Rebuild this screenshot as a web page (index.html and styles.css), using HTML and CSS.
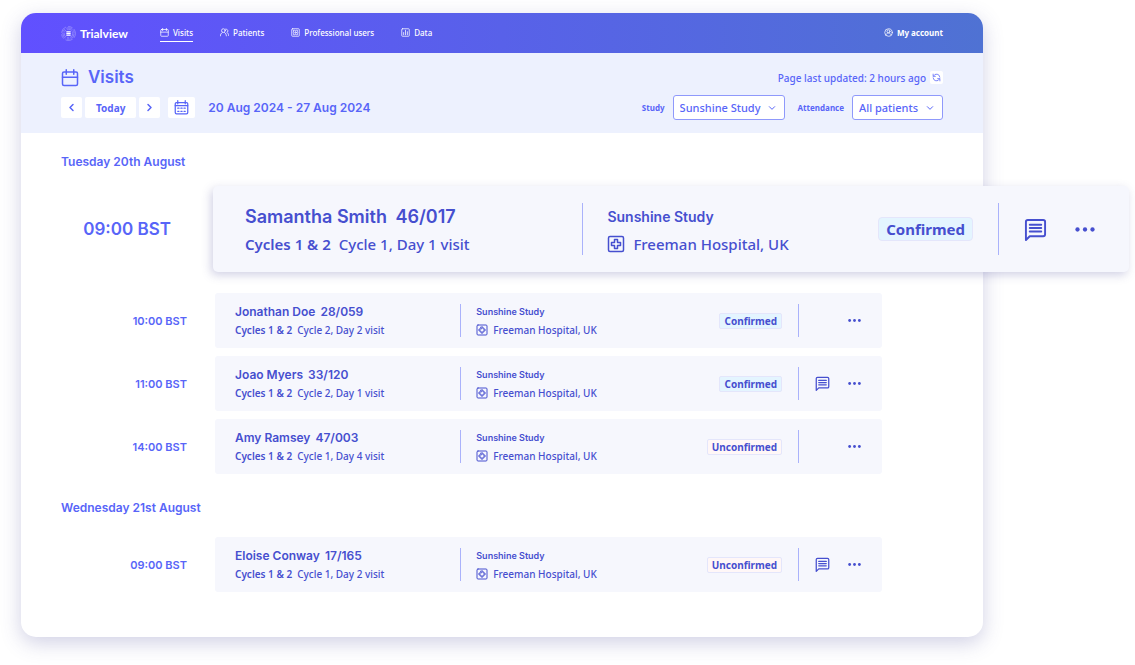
FILE: index.html
```html
<!DOCTYPE html>
<html lang="en">
<head>
    <meta charset="UTF-8">
    <meta name="viewport" content="width=device-width, initial-scale=1.0">
    <title>Trialview - Visits</title>

    <link rel="stylesheet" href="styles.css">
</head>
<body>

    <!-- shared icons -->
    <svg class="sprite" aria-hidden="true">
        <symbol id="calendar" viewBox="0 0 24 24">
            <rect x="2" y="4" width="20" height="18" rx="2"/>
            <path d="M2 11h20M7 1v6M17 1v6"/>
        </symbol>
        <symbol id="calendar-days" viewBox="0 0 24 24">
            <rect x="2" y="4" width="20" height="18" rx="2"/>
            <path d="M2 9h20M6 1v5M18 1v5"/>
            <path d="M6 13h2M11 13h2M16 13h2M6 18h2M11 18h2M16 18h2"/>
        </symbol>
        <symbol id="hospital" viewBox="0 0 24 24">
            <rect x="2" y="2" width="20" height="20" rx="2"/>
            <path d="M10 6h4v4h4v4h-4v4h-4v-4H6v-4h4z"/>
        </symbol>
        <symbol id="message" viewBox="0 0 24 24">
            <path d="M2 23V4a2 2 0 0 1 2-2h16a2 2 0 0 1 2 2v13a2 2 0 0 1-2 2H6z"/>
            <path d="M6 7h12M6 10.500h12M6 14h12"/>
        </symbol>
        <symbol id="dots" viewBox="0 0 24 24">
            <circle cx="3" cy="12" r="2.600"/>
            <circle cx="12" cy="12" r="2.600"/>
            <circle cx="21" cy="12" r="2.600"/>
        </symbol>
        <symbol id="chevron" viewBox="0 0 24 24">
            <path d="M4 8l8 8 8-8"/>
        </symbol>
    </svg>

    <div class="app">

        <header class="navbar">
            <a class="logo" href="#">
                <svg class="logo-mark" viewBox="0 0 28 28" aria-hidden="true">
                    <circle cx="14" cy="14" r="13" stroke-dasharray="9 3 14 4"/>
                    <circle cx="14" cy="14" r="10.500" stroke-dasharray="12 2 5 3"/>
                    <circle cx="14" cy="14" r="8" stroke-dasharray="9 2 4 2"/>
                    <path class="logo-lines" d="M10 11h8M10 14h8M10 17h8"/>
                </svg>
                <span>Trialview</span>
            </a>
            <nav class="menu">
                <a class="menu-link active" href="#">
                    <svg class="icon"><use href="#calendar"/></svg>Visits
                </a>
                <a class="menu-link" href="#">
                    <svg class="icon" viewBox="0 0 24 24">
                        <circle cx="9" cy="7" r="5"/>
                        <path d="M1 21c0-4 2-7 5-9M12 12c3 2 5 5 5 9M15 3c4 0 6 2 6 5 0 2-1 3-3 4 3 1 5 4 5 8"/>
                    </svg>Patients
                </a>
                <a class="menu-link" href="#">
                    <svg class="icon" viewBox="0 0 24 24">
                        <rect x="2" y="2" width="20" height="20" rx="2"/>
                        <path d="M7 6h2l3 1 3-1h2v3l1 3-1 3v3h-2l-3-1-3 1H7v-3l-1-3 1-3z"/>
                        <circle cx="12" cy="12" r="2"/>
                    </svg>Professional users
                </a>
                <a class="menu-link" href="#">
                    <svg class="icon" viewBox="0 0 24 24">
                        <rect x="2" y="2" width="20" height="20" rx="2"/>
                        <path d="M7 18v-6M12 18V6M17 18v-8"/>
                    </svg>Data
                </a>
            </nav>
            <a class="menu-link account" href="#">
                <svg class="icon" viewBox="0 0 24 24">
                    <circle cx="12" cy="12" r="10"/>
                    <circle cx="12" cy="9" r="4"/>
                    <path d="M5 19c1-4 4-6 7-6s6 2 7 6"/>
                </svg>My account
            </a>
        </header>

        <section class="toolbar">
            <div class="toolbar-row">
                <h1 class="title"><svg class="icon"><use href="#calendar"/></svg>Visits</h1>
                <div class="updated">
                    <span>Page last updated: 2 hours ago</span>
                    <button class="refresh" aria-label="Refresh">
                        <svg class="icon" viewBox="0 0 24 24">
                            <path d="M3 3v6h6M21 21v-6h-6M4 8a9 9 0 0 1 17 3M20 16a9 9 0 0 1-17-3"/>
                        </svg>
                    </button>
                </div>
            </div>
            <div class="toolbar-row">
                <div class="dates">
                    <button class="btn" aria-label="Previous week"><svg class="icon left"><use href="#chevron"/></svg></button>
                    <button class="btn today">Today</button>
                    <button class="btn" aria-label="Next week"><svg class="icon right"><use href="#chevron"/></svg></button>
                    <button class="btn pick" aria-label="Pick a date"><svg class="icon"><use href="#calendar-days"/></svg></button>
                    <h2 class="range">20 Aug 2024 - 27 Aug 2024</h2>
                </div>
                <form class="filters">
                    <label for="study">Study</label>
                    <div class="select">
                        <select id="study">
                            <option>Sunshine Study</option>
                        </select>
                        <svg class="icon"><use href="#chevron"/></svg>
                    </div>
                    <label for="attendance">Attendance</label>
                    <div class="select">
                        <select id="attendance">
                            <option>All patients</option>
                        </select>
                        <svg class="icon"><use href="#chevron"/></svg>
                    </div>
                </form>
            </div>
        </section>

        <main class="schedule">

            <h2 class="day">Tuesday 20th August</h2>

            <div class="visit featured">
                <time class="time">09:00 BST</time>
                <article class="card">
                    <div class="patient">
                        <h3 class="name">Samantha Smith <span>46/017</span></h3>
                        <p class="line"><b>Cycles 1 &amp; 2</b> Cycle 1, Day 1 visit</p>
                    </div>
                    <div class="study">
                        <div>
                            <h4 class="study-name">Sunshine Study</h4>
                            <p class="line"><svg class="icon"><use href="#hospital"/></svg>Freeman Hospital, UK</p>
                        </div>
                        <span class="badge confirmed">Confirmed</span>
                    </div>
                    <div class="actions">
                        <button class="action" aria-label="Messages"><svg class="icon"><use href="#message"/></svg></button>
                        <button class="action more" aria-label="More"><svg class="icon"><use href="#dots"/></svg></button>
                    </div>
                </article>
            </div>

            <div class="visit">
                <time class="time">10:00 BST</time>
                <article class="card">
                    <div class="patient">
                        <h3 class="name">Jonathan Doe <span>28/059</span></h3>
                        <p class="line"><b>Cycles 1 &amp; 2</b> Cycle 2, Day 2 visit</p>
                    </div>
                    <div class="study">
                        <div>
                            <h4 class="study-name">Sunshine Study</h4>
                            <p class="line"><svg class="icon"><use href="#hospital"/></svg>Freeman Hospital, UK</p>
                        </div>
                        <span class="badge confirmed">Confirmed</span>
                    </div>
                    <div class="actions">
                        <button class="action more" aria-label="More"><svg class="icon"><use href="#dots"/></svg></button>
                    </div>
                </article>
            </div>

            <div class="visit">
                <time class="time">11:00 BST</time>
                <article class="card">
                    <div class="patient">
                        <h3 class="name">Joao Myers <span>33/120</span></h3>
                        <p class="line"><b>Cycles 1 &amp; 2</b> Cycle 2, Day 1 visit</p>
                    </div>
                    <div class="study">
                        <div>
                            <h4 class="study-name">Sunshine Study</h4>
                            <p class="line"><svg class="icon"><use href="#hospital"/></svg>Freeman Hospital, UK</p>
                        </div>
                        <span class="badge confirmed">Confirmed</span>
                    </div>
                    <div class="actions">
                        <button class="action" aria-label="Messages"><svg class="icon"><use href="#message"/></svg></button>
                        <button class="action more" aria-label="More"><svg class="icon"><use href="#dots"/></svg></button>
                    </div>
                </article>
            </div>

            <div class="visit">
                <time class="time">14:00 BST</time>
                <article class="card">
                    <div class="patient">
                        <h3 class="name">Amy Ramsey <span>47/003</span></h3>
                        <p class="line"><b>Cycles 1 &amp; 2</b> Cycle 1, Day 4 visit</p>
                    </div>
                    <div class="study">
                        <div>
                            <h4 class="study-name">Sunshine Study</h4>
                            <p class="line"><svg class="icon"><use href="#hospital"/></svg>Freeman Hospital, UK</p>
                        </div>
                        <span class="badge unconfirmed">Unconfirmed</span>
                    </div>
                    <div class="actions">
                        <button class="action more" aria-label="More"><svg class="icon"><use href="#dots"/></svg></button>
                    </div>
                </article>
            </div>

            <h2 class="day">Wednesday 21st August</h2>

            <div class="visit">
                <time class="time">09:00 BST</time>
                <article class="card">
                    <div class="patient">
                        <h3 class="name">Eloise Conway <span>17/165</span></h3>
                        <p class="line"><b>Cycles 1 &amp; 2</b> Cycle 1, Day 2 visit</p>
                    </div>
                    <div class="study">
                        <div>
                            <h4 class="study-name">Sunshine Study</h4>
                            <p class="line"><svg class="icon"><use href="#hospital"/></svg>Freeman Hospital, UK</p>
                        </div>
                        <span class="badge unconfirmed">Unconfirmed</span>
                    </div>
                    <div class="actions">
                        <button class="action" aria-label="Messages"><svg class="icon"><use href="#message"/></svg></button>
                        <button class="action more" aria-label="More"><svg class="icon"><use href="#dots"/></svg></button>
                    </div>
                </article>
            </div>

        </main>
    </div>

</body>
</html>
```
FILE: styles.css
```css
* {
    margin: 0;
    padding: 0;
    box-sizing: border-box;
}

body {
    background-color: white;
    color: #5865f8;
    font-family: "Noto Sans", sans-serif;
    font-size: 10px;
    font-weight: 500;
}

button,
select {
    font: inherit;
    color: inherit;
    border: none;
    background: none;
    cursor: pointer;
}

a {
    color: inherit;
    text-decoration: none;
}

.sprite {
    display: none;
}

.icon {
    width: 12px;
    height: 12px;
    flex-shrink: 0;
    fill: none;
    stroke: currentColor;
    stroke-width: 2;
    stroke-linecap: round;
    stroke-linejoin: round;
}

.app {
    margin: 13px 152px 28px 21px;
    border-radius: 15px;
    background-color: white;
    box-shadow: 0 6px 20px rgba(70, 70, 150, 0.25);
}

/* top bar */
.navbar {
    display: flex;
    align-items: center;
    height: 40px;
    padding: 0 40px;
    border-radius: 15px 15px 0 0;
    background: linear-gradient(90deg, #6150ff, #4f72d3);
    color: white;
}

.logo {
    display: flex;
    align-items: center;
    gap: 4px;
    font-family: Lato, sans-serif;
    font-size: 12px;
    font-weight: 700;
}

.logo-mark {
    width: 15px;
    height: 15px;
    fill: none;
    stroke: rgba(255, 255, 255, 0.5);
    stroke-width: 1;
}

.logo-lines {
    stroke: white;
    stroke-width: 2;
}

.menu {
    display: flex;
    gap: 27px;
    margin-left: 32px;
}

.menu-link {
    display: flex;
    align-items: center;
    gap: 4px;
    padding: 2px 0;
    font-size: 8px;
    line-height: 12px;
    border-bottom: 1px solid transparent;
}

.menu-link .icon {
    width: 9px;
    height: 9px;
}

.menu-link.active {
    border-color: white;
}

.account {
    margin-left: auto;
    font-weight: 700;
}

/* title, dates and filters */
.toolbar {
    display: flex;
    flex-direction: column;
    gap: 5px;
    padding: 12px 40px 13px;
    background-color: #edf1fe;
}

.toolbar-row {
    display: flex;
    align-items: center;
    justify-content: space-between;
}

.title,
.range,
.day,
.time,
.name,
.study-name {
    font-family: Inter, sans-serif;
    font-weight: 600;
}

.title {
    display: flex;
    align-items: center;
    gap: 9px;
    font-size: 17px;
    line-height: 25px;
}

.title .icon {
    width: 18px;
    height: 18px;
}

.updated {
    display: flex;
    align-items: center;
    gap: 4px;
}

.refresh {
    display: flex;
    padding: 2px;
    border-radius: 2px;
    background-color: white;
}

.refresh .icon {
    width: 9px;
    height: 9px;
}

.dates {
    display: flex;
    align-items: center;
    gap: 3px;
}

.btn {
    display: flex;
    align-items: center;
    justify-content: center;
    min-width: 21px;
    height: 21px;
    border-radius: 2px;
    background-color: white;
}

.btn .icon {
    width: 9px;
    height: 9px;
    stroke-width: 4;
}

.left {
    transform: rotate(90deg);
}

.right {
    transform: rotate(-90deg);
}

.today {
    padding: 0 11px;
    font-weight: 700;
}

.pick {
    width: 27px;
    margin-left: 5px;
}

.pick .icon {
    width: 15px;
    height: 15px;
    stroke-width: 2;
}

.range {
    margin-left: 10px;
    font-size: 12px;
}

.filters {
    display: flex;
    align-items: center;
    font-size: 8px;
    font-weight: 700;
}

.select {
    display: flex;
    align-items: center;
    position: relative;
    margin: 0 13px 0 8px;
}

.select:last-child {
    margin-right: 0;
}

.select select {
    height: 25px;
    padding: 0 23px 0 6px;
    border: 1px solid #8f99fb;
    border-radius: 3px;
    background-color: white;
    font-size: 11px;
    font-weight: 500;
    appearance: none;
}

.select .icon {
    position: absolute;
    right: 9px;
    width: 8px;
    height: 8px;
    stroke-width: 3;
    pointer-events: none;
}

/* visits */
.schedule {
    display: flex;
    flex-direction: column;
    gap: 8px;
    padding: 21px 101px 45px 40px;
}

.day {
    margin-bottom: 8px;
    font-size: 12px;
    line-height: 16px;
}

.visit + .day {
    margin-top: 18px;
    margin-bottom: 13px;
}

.visit {
    display: flex;
    align-items: center;
    gap: 28px;
}

.time {
    width: 126px;
    font-size: 11px;
    text-align: right;
    white-space: nowrap;
}

.card {
    display: grid;
    grid-template-columns: 42fr 58fr 83px;
    flex: 1;
    padding: 11px 0;
    border-radius: 3px;
    background-color: #f6f7fd;
    color: #464fcf;
}

.patient {
    padding-left: 20px;
}

.name {
    margin-bottom: 3px;
    font-size: 12px;
    line-height: 16px;
}

.name span {
    margin-left: 2px;
}

.line {
    display: flex;
    align-items: center;
    gap: 5px;
    line-height: 14px;
    white-space: nowrap;
}

.line b {
    font-weight: 600;
}

.study {
    display: flex;
    align-items: center;
    justify-content: space-between;
    padding: 0 16px 0 15px;
    border-left: 1px solid #aab2fb;
    border-right: 1px solid #aab2fb;
}

.study-name {
    margin-bottom: 3px;
    font-size: 9px;
    line-height: 16px;
}

.badge {
    padding: 0 4px;
    border: 1px solid #e4e6fb;
    border-radius: 2px;
    font-weight: 700;
    line-height: 14px;
}

.confirmed {
    background-color: #e4f5ff;
}

.unconfirmed {
    background-color: #fff7f7;
}

.actions {
    display: flex;
    align-items: center;
    justify-content: flex-end;
    gap: 18px;
    padding-right: 21px;
}

.action {
    display: flex;
}

.action .icon {
    width: 15px;
    height: 15px;
}

.more .icon {
    width: 13px;
    fill: currentColor;
    stroke: none;
}

/* enlarged visit, runs out past the right side of the window */
.featured {
    gap: 42px;
    margin: 0 -247px 13px 0;
}

.featured .time {
    width: 110px;
    font-size: 17px;
}

.featured .card {
    grid-template-columns: 47fr 53fr 130px;
    padding: 17px 0;
    border-radius: 5px;
    box-shadow: -2px 3px 10px rgba(70, 70, 150, 0.25);
}

.featured .patient {
    padding-left: 32px;
}

.featured .name {
    font-size: 18px;
    line-height: 27px;
}

.featured .name span {
    margin-left: 4px;
}

.featured .line {
    gap: 8px;
    font-size: 15px;
    line-height: 22px;
}

.featured .study {
    padding: 0 25px 0 24px;
}

.featured .study-name {
    font-size: 14px;
    line-height: 27px;
}

.featured .line .icon {
    width: 18px;
    height: 18px;
}

.featured .badge {
    padding: 0 7px;
    border-radius: 4px;
    font-size: 15px;
    line-height: 22px;
}

.featured .actions {
    gap: 28px;
    padding-right: 34px;
}

.featured .action .icon {
    width: 23px;
    height: 23px;
}

.featured .more .icon {
    width: 20px;
}
```
